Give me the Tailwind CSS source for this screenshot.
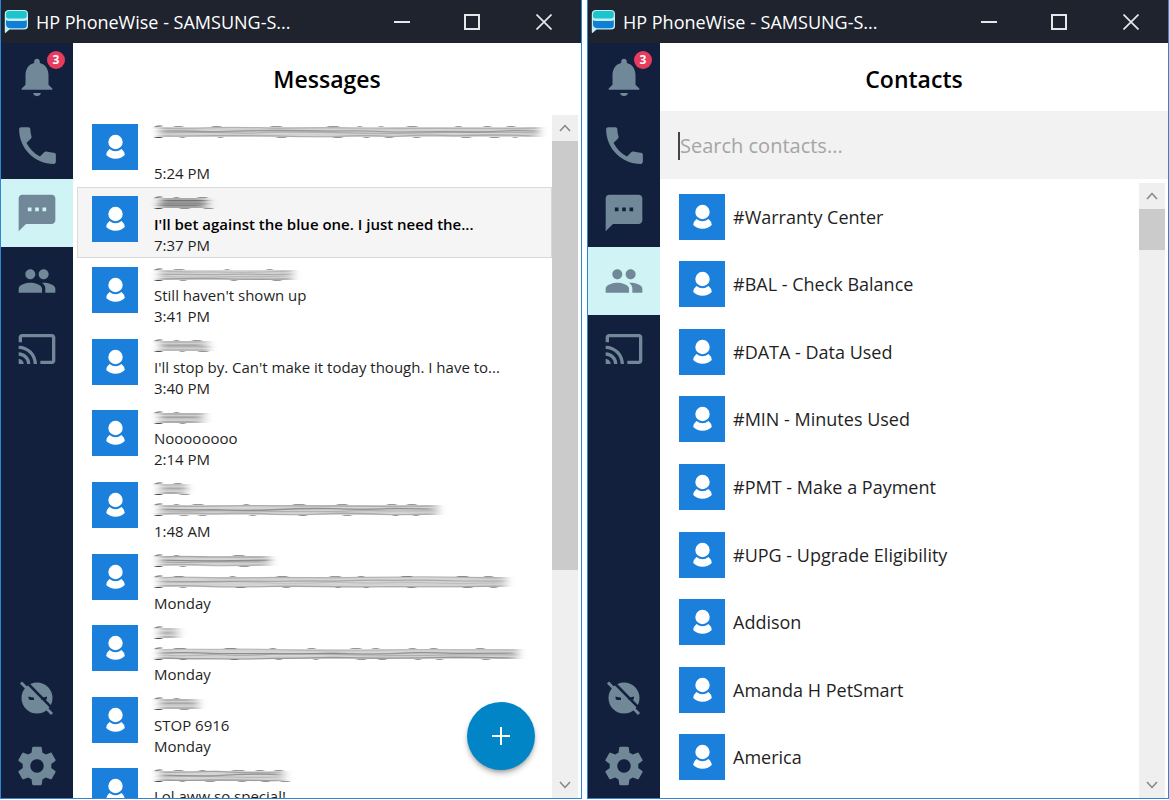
<!DOCTYPE html>
<html lang="en">
<head>
    <meta charset="UTF-8">
    <meta name="viewport" content="width=device-width, initial-scale=1.0">
    <title>HP PhoneWise</title>
    <script src="https://cdn.jsdelivr.net/npm/@tailwindcss/browser@4"></script>
</head>
<body class="h-screen overflow-hidden bg-white font-['Open_Sans',sans-serif] text-[#1f1f1f]">
    <!-- Icon sprite -->
    <svg class="absolute size-0">
        <symbol id="logo" viewBox="0 0 24 25">
            <path d="M5 1h15q4 0 4 4v12q0 3.500-4 3.500H5.500L1.500 24Q.8 24.300.8 23V5q0-4 4.200-4z" fill="#c4eef6"/>
            <path d="M5.500 2H20q2.800 0 2.800 2.800V6.500q0 3-3 3H4.500Q2 9.500 2 7.500V5q0-3 3.500-3z" fill="#1cc4cb"/>
            <path d="M2 11.200q1.500.8 3.500.8H20q2.800-.3 2.800-1V16q0 3.200-3.300 3.200H7q-5 0-5-4z" fill="#0f7fd6"/>
        </symbol>
        <symbol id="bell" viewBox="0 0 24 24"><path d="M12 22c1.100 0 2-.7 2-1.600h-4c0 .9.900 1.600 2 1.600zm6-6v-5c0-3.070-1.640-5.640-4.500-6.320V4c0-.83-.67-1.500-1.500-1.500s-1.500.67-1.500 1.500v.68C7.630 5.360 6 7.920 6 11v5l-2 2v.700h16V18l-2-2z"/></symbol>
        <symbol id="phone" viewBox="0 0 24 24"><path d="M6.620 10.790c1.440 2.830 3.760 5.140 6.590 6.590l2.200-2.200c.27-.27.67-.36 1.020-.24 1.120.37 2.330.57 3.570.57.55 0 1 .45 1 1V20c0 .55-.45 1-1 1-9.390 0-17-7.610-17-17 0-.55.45-1 1-1h3.500c.55 0 1 .45 1 1 0 1.250.2 2.450.57 3.570.11.35.03.74-.25 1.020l-2.200 2.200z"/></symbol>
        <symbol id="sms" viewBox="0 0 24 24"><path d="M20 2H4c-1.100 0-1.990.9-1.990 2L2 22l4-4h14c1.100 0 2-.9 2-2V4c0-1.100-.9-2-2-2zM9 11H7V9h2v2zm4 0h-2V9h2v2zm4 0h-2V9h2v2z"/></symbol>
        <symbol id="people" viewBox="0 0 24 24"><path d="M16 11c1.660 0 2.990-1.340 2.990-3S17.660 5 16 5c-1.660 0-3 1.340-3 3s1.340 3 3 3zm-8 0c1.660 0 2.990-1.340 2.990-3S9.660 5 8 5C6.340 5 5 6.340 5 8s1.340 3 3 3zm0 2c-2.330 0-7 1.170-7 3.500V19h14v-2.500c0-2.330-4.670-3.500-7-3.500zm8 0c-.29 0-.62.02-.97.05 1.160.84 1.970 1.970 1.970 3.450V19h6v-2.500c0-2.330-4.670-3.500-7-3.500z"/></symbol>
        <symbol id="cast" viewBox="0 0 24 24"><path d="M21 3H3c-1.100 0-2 .9-2 2v3h2V5h18v14h-7v2h7c1.100 0 2-.9 2-2V5c0-1.100-.9-2-2-2zM1 18v3h3c0-1.660-1.340-3-3-3zm0-4v2c2.760 0 5 2.240 5 5h2c0-3.870-3.130-7-7-7zm0-4v2c4.970 0 9 4.030 9 9h2c0-6.080-4.930-11-11-11z"/></symbol>
        <symbol id="quiet" viewBox="0 0 36 36">
            <circle cx="18" cy="18" r="15.500"/>
            <path d="M9.500 16.500q3 1 5.500 1v2.500h-3.500q-2 0-2-2zM28 16.500q-3 1-5.500 1v2.500H26q2 0 2-2z" fill="#121f3d"/>
            <path d="M5.500 0l31 31.500" stroke="#121f3d" stroke-width="2.500"/>
            <path d="M2 2.500l31 31.500" stroke="#708898" stroke-width="3"/>
        </symbol>
        <symbol id="gear" viewBox="0 0 24 24"><path d="M19.430 12.980c.04-.32.07-.64.07-.98s-.03-.66-.07-.98l2.110-1.650c.19-.15.24-.42.12-.64l-2-3.460c-.12-.22-.39-.3-.61-.22l-2.490 1c-.52-.4-1.080-.73-1.690-.98l-.38-2.650C14.460 2.180 14.250 2 14 2h-4c-.25 0-.46.18-.49.42l-.38 2.650c-.61.25-1.170.59-1.690.98l-2.490-1c-.23-.09-.49 0-.61.22l-2 3.460c-.13.22-.07.49.12.64l2.110 1.650c-.04.32-.07.65-.07.98s.03.66.07.98l-2.110 1.650c-.19.15-.24.42-.12.64l2 3.460c.12.22.39.3.61.22l2.490-1c.52.4 1.080.73 1.690.98l.38 2.650c.03.24.24.42.49.42h4c.25 0 .46-.18.49-.42l.38-2.650c.61-.25 1.170-.59 1.690-.98l2.490 1c.23.09.49 0 .61-.22l2-3.460c.12-.22.07-.49-.12-.64l-2.110-1.650zM12 15.500c-1.930 0-3.500-1.570-3.500-3.500s1.570-3.500 3.500-3.500 3.500 1.570 3.500 3.500-1.570 3.500-3.500 3.500z"/></symbol>
        <symbol id="person" viewBox="0 0 46 46">
            <circle cx="23.500" cy="18" r="7.200"/>
            <path d="M17.500 25q6 4.500 12 0q3 2.300 3.300 6q-3.500 3.700-9.300 3.700t-9.300-3.700q.3-3.700 3.300-6z"/>
        </symbol>
        <symbol id="up" viewBox="0 0 12 8"><path d="M1 7l5-5.500L11 7" fill="none" stroke="currentColor" stroke-width="1.500"/></symbol>
        <symbol id="down" viewBox="0 0 12 8"><path d="M1 1l5 5.500L11 1" fill="none" stroke="currentColor" stroke-width="1.500"/></symbol>
        <filter id="smear" filterUnits="userSpaceOnUse" x="-10" y="-4" width="420" height="28"><feGaussianBlur stdDeviation="4 0.700"/></filter>
        <filter id="soften" filterUnits="userSpaceOnUse" x="-10" y="-4" width="420" height="28"><feGaussianBlur stdDeviation="1.200 0.400"/></filter>
    </svg>

    <div class="grid h-full grid-cols-2 gap-[5px] pb-px">
        <!-- Messages window -->
        <section class="flex min-h-0 min-w-0 flex-col border-x border-b border-[#2b86d4]">
            <header class="flex h-[43px] shrink-0 items-center bg-[#1e232e] pl-[3px] text-white">
                <svg class="h-[25px] w-6"><use href="#logo"/></svg>
                <h1 class="ml-2 text-lg">HP PhoneWise - SAMSUNG-S...</h1>
                <div class="ml-auto flex">
                    <button aria-label="Minimize" class="flex h-[43px] w-[70px] items-center justify-center"><span class="h-[2px] w-4 bg-gray-200"></span></button>
                    <button aria-label="Maximize" class="flex h-[43px] w-[70px] items-center justify-center"><span class="size-4 border-2 border-gray-200"></span></button>
                    <button aria-label="Close" class="flex h-[43px] w-[74px] items-center justify-center"><svg class="size-4" viewBox="0 0 16 16"><path d="M.5.5l15 15M15.500.5l-15 15" stroke="#e5e7eb" stroke-width="1.700"/></svg></button>
                </div>
            </header>
            <div class="flex min-h-0 flex-1">
                <nav class="flex w-[72px] shrink-0 flex-col bg-[#121f3d] fill-current text-[#708898]">
                    <button aria-label="Notifications" class="relative flex h-[68px] items-center justify-center">
                        <svg class="size-[46px]"><use href="#bell"/></svg>
                        <span class="absolute top-2 right-2 flex size-[18px] items-center justify-center rounded-full bg-[#e73c5e] text-xs font-bold text-white">3</span>
                    </button>
                    <button aria-label="Calls" class="flex h-[68px] items-center justify-center"><svg class="size-[49px]"><use href="#phone"/></svg></button>
                    <button aria-label="Messages" class="flex h-[68px] items-center justify-center bg-[#d0f4f5]"><svg class="size-11"><use href="#sms"/></svg></button>
                    <button aria-label="Contacts" class="flex h-[68px] items-center justify-center"><svg class="size-10"><use href="#people"/></svg></button>
                    <button aria-label="Cast" class="flex h-[68px] items-center justify-center"><svg class="size-10"><use href="#cast"/></svg></button>
                    <button aria-label="Do not disturb" class="mt-auto flex h-[72px] items-center justify-center"><svg class="size-9"><use href="#quiet"/></svg></button>
                    <button aria-label="Settings" class="flex h-16 items-center justify-center"><svg class="size-[46px]"><use href="#gear"/></svg></button>
                </nav>
                <main class="relative flex min-w-0 flex-1 flex-col">
                    <h2 class="flex h-[72px] shrink-0 items-center justify-center text-[23px] font-semibold text-black">Messages</h2>
                    <div class="flex min-h-0 flex-1 pr-[3px] pl-1">
                        <div class="min-w-0 flex-1 overflow-hidden">
                            <ul id="message-list" class="grid h-[716px] auto-rows-fr"></ul>
                        </div>
                        <div class="flex w-[26px] shrink-0 flex-col bg-[#efefef] text-[#858585]">
                            <div class="flex h-[26px] items-center justify-center"><svg class="h-2 w-3"><use href="#up"/></svg></div>
                            <div class="h-[429px] bg-[#cbcbcb]"></div>
                            <div class="mt-auto flex h-[26px] items-center justify-center"><svg class="h-2 w-3"><use href="#down"/></svg></div>
                        </div>
                    </div>
                    <button aria-label="New message" class="absolute right-[46px] bottom-7 flex size-[68px] items-center justify-center rounded-full bg-[#0285c7] shadow-md shadow-black/30">
                        <svg class="size-[18px]" viewBox="0 0 18 18"><path d="M9 0v18M0 9h18" stroke="#fff" stroke-width="2"/></svg>
                    </button>
                </main>
            </div>
        </section>

        <!-- Contacts window -->
        <section class="flex min-h-0 min-w-0 flex-col border-x border-b border-[#2b86d4]">
            <header class="flex h-[43px] shrink-0 items-center bg-[#1e232e] pl-[3px] text-white">
                <svg class="h-[25px] w-6"><use href="#logo"/></svg>
                <h1 class="ml-2 text-lg">HP PhoneWise - SAMSUNG-S...</h1>
                <div class="ml-auto flex">
                    <button aria-label="Minimize" class="flex h-[43px] w-[70px] items-center justify-center"><span class="h-[2px] w-4 bg-gray-200"></span></button>
                    <button aria-label="Maximize" class="flex h-[43px] w-[70px] items-center justify-center"><span class="size-4 border-2 border-gray-200"></span></button>
                    <button aria-label="Close" class="flex h-[43px] w-[74px] items-center justify-center"><svg class="size-4" viewBox="0 0 16 16"><path d="M.5.5l15 15M15.500.5l-15 15" stroke="#e5e7eb" stroke-width="1.700"/></svg></button>
                </div>
            </header>
            <div class="flex min-h-0 flex-1">
                <nav class="flex w-[72px] shrink-0 flex-col bg-[#121f3d] fill-current text-[#708898]">
                    <button aria-label="Notifications" class="relative flex h-[68px] items-center justify-center">
                        <svg class="size-[46px]"><use href="#bell"/></svg>
                        <span class="absolute top-2 right-2 flex size-[18px] items-center justify-center rounded-full bg-[#e73c5e] text-xs font-bold text-white">3</span>
                    </button>
                    <button aria-label="Calls" class="flex h-[68px] items-center justify-center"><svg class="size-[49px]"><use href="#phone"/></svg></button>
                    <button aria-label="Messages" class="flex h-[68px] items-center justify-center"><svg class="size-11"><use href="#sms"/></svg></button>
                    <button aria-label="Contacts" class="flex h-[68px] items-center justify-center bg-[#d0f4f5]"><svg class="size-10"><use href="#people"/></svg></button>
                    <button aria-label="Cast" class="flex h-[68px] items-center justify-center"><svg class="size-10"><use href="#cast"/></svg></button>
                    <button aria-label="Do not disturb" class="mt-auto flex h-[72px] items-center justify-center"><svg class="size-9"><use href="#quiet"/></svg></button>
                    <button aria-label="Settings" class="flex h-16 items-center justify-center"><svg class="size-[46px]"><use href="#gear"/></svg></button>
                </nav>
                <main class="flex min-w-0 flex-1 flex-col">
                    <h2 class="flex h-[68px] shrink-0 items-center justify-center pt-1 text-[23px] font-semibold text-black">Contacts</h2>
                    <div class="flex h-[68px] shrink-0 items-center bg-[#f2f2f2] pt-[2px] pl-[18px]">
                        <span class="h-7 w-[2px] bg-[#444444]"></span>
                        <input type="text" aria-label="Search contacts" placeholder="Search contacts..." class="min-w-0 flex-1 bg-transparent text-xl outline-none placeholder:text-[#a5a5a5]">
                    </div>
                    <div class="flex min-h-0 flex-1 pt-1 pr-[3px] pl-[19px]">
                        <div class="min-w-0 flex-1 overflow-hidden">
                            <ul id="contact-list" class="grid h-[608px] auto-rows-fr"></ul>
                        </div>
                        <div class="flex w-[26px] shrink-0 flex-col bg-[#efefef] text-[#858585]">
                            <div class="flex h-[26px] items-center justify-center"><svg class="h-2 w-3"><use href="#up"/></svg></div>
                            <div class="h-[41px] bg-[#cbcbcb]"></div>
                            <div class="mt-auto flex h-[26px] items-center justify-center"><svg class="h-2 w-3"><use href="#down"/></svg></div>
                        </div>
                    </div>
                </main>
            </div>
        </section>
    </div>

    <script>
        // A number instead of a string is the width of a smeared-out line
        const messages = [
            { name: 391, text: '', time: '5:24 PM' },
            { name: 60, text: "I'll bet against the blue one. I just need the...", time: '7:37 PM', unread: true },
            { name: 145, text: "Still haven't shown up", time: '3:41 PM' },
            { name: 60, text: "I'll stop by. Can't make it today though. I have to...", time: '3:40 PM' },
            { name: 56, text: 'Noooooooo', time: '2:14 PM' },
            { name: 38, text: 290, time: '1:48 AM' },
            { name: 122, text: 358, time: 'Monday' },
            { name: 30, text: 370, time: 'Monday' },
            { name: 50, text: 'STOP 6916', time: 'Monday' },
            { name: 136, text: 'Lol aww so special!', time: '' }
        ];

        const contacts = [
            '#Warranty Center',
            '#BAL - Check Balance',
            '#DATA - Data Used',
            '#MIN - Minutes Used',
            '#PMT - Make a Payment',
            '#UPG - Upgrade Eligibility',
            'Addison',
            'Amanda H PetSmart',
            'America'
        ];

        let seed = 7;
        function random() {
            seed = (seed * 16807) % 2147483647;
            return seed / 2147483647;
        }

        function smear(width, dark) {
            const shades = dark ? ['#222', '#444', '#111'] : ['#888', '#ccc', '#666'];
            let lines = '';
            for (let i = 0; i < 6; i++) {
                const y = 5 + i * 1.6;
                let d = `M${4 + random() * 4} ${y}`;
                for (let x = 30; x < width - 40; x += 60) {
                    d += `Q${x} ${y + random() * 4 - 2} ${x + 30} ${y + random() * 2 - 1}`;
                }
                d += `L${width - 5 - random() * 8} ${y}`;
                lines += `<path d="${d}" stroke="${shades[i % 3]}" stroke-opacity="${0.3 + random() * 0.4}" stroke-width="1.3"/>`;
            }
            // bits of the letters still showing above and below
            let bits = '<path d="M1 4l3-1h4M1 14.5h7" stroke="#222" stroke-opacity="0.8"/>';
            for (let x = 20; x < width - 14; x += 18 + random() * 44) {
                bits += `<path d="M${x} 3.5h${4 + random() * 8}" stroke="#333" stroke-opacity="0.5"/>`;
                bits += `<path d="M${x + 6} 14.5h${4 + random() * 6}" stroke="#333" stroke-opacity="0.5"/>`;
            }
            return `<svg class="h-[18px] shrink-0 overflow-visible" width="${width}" height="18" fill="none">
                <g filter="url(#smear)"><path d="M5 9H${width - 5}" stroke="#bbb" stroke-opacity="0.6" stroke-width="10"/>${lines}</g>
                <g filter="url(#soften)">${bits}</g>
            </svg>`;
        }

        function line(value, dark) {
            return typeof value === 'number' ? smear(value, dark) : value;
        }

        document.getElementById('message-list').innerHTML = messages.map(m => `
            <li class="flex min-h-0 gap-4 border pl-[14px] ${m.unread ? 'border-[#d9d9d9] bg-[#f5f5f5]' : 'border-transparent'}">
                <svg class="mt-2 size-[46px] shrink-0 bg-[#1b80dc] fill-white"><use href="#person"/></svg>
                <div class="h-[68px] min-w-0 pt-[5px] text-[15px] leading-[21px] whitespace-nowrap">
                    <div class="flex h-[21px] items-center">${line(m.name, m.unread)}</div>
                    <div class="flex h-[21px] items-center ${m.unread ? 'font-semibold text-black' : ''}">${line(m.text)}</div>
                    <div class="h-[21px]">${m.time}</div>
                </div>
            </li>
        `).join('');

        document.getElementById('contact-list').innerHTML = contacts.map(name => `
            <li class="flex items-center gap-2 text-lg">
                <svg class="size-[46px] shrink-0 bg-[#1b80dc] fill-white"><use href="#person"/></svg>
                <span>${name}</span>
            </li>
        `).join('');
    </script>
</body>
</html>
